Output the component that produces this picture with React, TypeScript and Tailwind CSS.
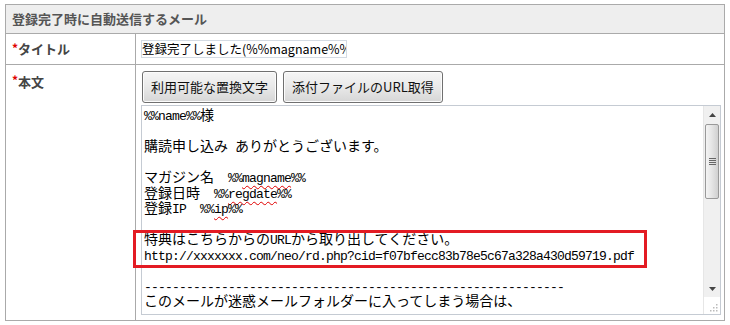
import clsx from "clsx";
import type { ReactNode } from "react";

const cjk = "font-['Noto_Sans_CJK_JP',sans-serif]";

// half-width runs in the textarea (MS Gothic-ish spacing: 7px per char)
function Mono({ children, wavy }: { children: ReactNode; wavy?: boolean }) {
  return (
    <span
      className={clsx(
        "font-['Liberation_Mono',monospace] text-[13px] tracking-[-0.8px]",
        wavy && "underline decoration-wavy decoration-[#e00000] underline-offset-[3px] decoration-1"
      )}
    >
      {children}
    </span>
  );
}

function Line({ children }: { children?: ReactNode }) {
  return <div className="h-[15.5px] leading-[15.5px] whitespace-pre">{children}</div>;
}

function Label({ text }: { text: string }) {
  return (
    <span className="text-[13px] font-bold text-[#444]">
      <span className="text-[#e00000] text-[12px] align-top">*</span>
      {text}
    </span>
  );
}

function Button({ children }: { children: ReactNode }) {
  return (
    <button className="h-[32px] px-[8px] rounded-[3px] border border-[#707070] bg-gradient-to-b from-[#f6f6f6] via-[#e9e9e9] to-[#d6d6d6] text-[13px] text-[#111] shadow-[inset_0_0_0_1px_#fcfcfc]">
      {children}
    </button>
  );
}

function Scrollbar() {
  return (
    <div className="w-[17px] flex flex-col bg-[#f0f0f0] border-l border-[#e6e6e6]">
      <div className="h-[17px] flex items-center justify-center">
        <svg width="7" height="4" viewBox="0 0 7 4">
          <path d="M3.5 0 L7 4 L0 4 Z" fill="#444" />
        </svg>
      </div>
      <div className="flex-1 pt-[1px] px-[1px]">
        <div className="h-[75px] rounded-[2px] border border-[#999] bg-gradient-to-r from-[#f4f4f4] via-[#e4e4e4] to-[#d0d0d0] flex flex-col items-center justify-center gap-[1px]">
          <div className="w-[7px] h-px bg-[#666]" />
          <div className="w-[7px] h-px bg-[#666]" />
          <div className="w-[7px] h-px bg-[#666]" />
          <div className="w-[7px] h-px bg-[#666]" />
        </div>
      </div>
      <div className="h-[17px] flex items-center justify-center">
        <svg width="7" height="4" viewBox="0 0 7 4">
          <path d="M0 0 L7 0 L3.5 4 Z" fill="#444" />
        </svg>
      </div>
      <div className="h-[17px] bg-white flex items-end justify-end p-[2px]">
        <svg width="9" height="9" viewBox="0 0 9 9">
          <rect x="7" y="1" width="1.5" height="1.5" fill="#bbb" />
          <rect x="4" y="4" width="1.5" height="1.5" fill="#bbb" />
          <rect x="7" y="4" width="1.5" height="1.5" fill="#bbb" />
          <rect x="1" y="7" width="1.5" height="1.5" fill="#bbb" />
          <rect x="4" y="7" width="1.5" height="1.5" fill="#bbb" />
          <rect x="7" y="7" width="1.5" height="1.5" fill="#bbb" />
        </svg>
      </div>
    </div>
  );
}

export default function App() {
  return (
    <div className={clsx("w-[730px] h-[325px] bg-white pt-[4px] pl-[5px]", cjk)}>
      <div className="w-[720px] border border-[#aaaaaa]">
        <div className="h-[29px] bg-[#eeeeee] border-b border-[#aaaaaa] flex items-center pl-[6px] text-[13px] font-bold text-[#555]">
          登録完了時に自動送信するメール
        </div>

        <div className="flex h-[31px] border-b border-[#aaaaaa]">
          <div className="w-[130px] border-r border-[#aaaaaa] flex items-center pl-[6px]">
            <Label text="タイトル" />
          </div>
          <div className="flex-1 flex items-center pl-[5px]">
            <div className="w-[206px] h-[18px] border border-[#d4dbe3] overflow-hidden whitespace-nowrap text-[12.5px] leading-[16px] text-black">
              登録完了しました(%%magname%%)
            </div>
          </div>
        </div>

        <div className="flex h-[255px]">
          <div className="w-[130px] border-r border-[#aaaaaa] pl-[6px] pt-[6px] leading-[18px]">
            <Label text="本文" />
          </div>
          <div className="flex-1 pl-[5px] pr-[3px] pt-[6px]">
            <div className="flex gap-[6px] pl-[1px]">
              <Button>利用可能な置換文字</Button>
              <Button>添付ファイルのURL取得</Button>
            </div>
            <div className="relative mt-[2px]">
              <div className="h-[210px] border border-[#c5cbd3] flex bg-white">
                <div className="flex-1 overflow-hidden pt-[1px] pl-[2px] text-[14px] text-black">
                  <Line><Mono>%%name%%</Mono>様</Line>
                  <Line />
                  <Line>購読申し込み<Mono> </Mono>ありがとうございます。</Line>
                  <Line />
                  <Line>マガジン名<Mono>  %%</Mono><Mono wavy>magname</Mono><Mono>%%</Mono></Line>
                  <Line>登録日時<Mono>  %%</Mono><Mono wavy>regdate</Mono><Mono>%%</Mono></Line>
                  <Line>登録<Mono>IP  %%</Mono><Mono wavy>ip</Mono><Mono>%%</Mono></Line>
                  <Line />
                  <Line>特典はこちらからの<Mono>URL</Mono>から取り出してください。</Line>
                  <Line><Mono>http://xxxxxxx.com/neo/rd.php?cid=f07bfecc83b78e5c67a328a430d59719.pdf</Mono></Line>
                  <Line />
                  <Line><Mono>------------------------------------------------------------</Mono></Line>
                  <Line>このメールが迷惑メールフォルダーに入ってしまう場合は、</Line>
                </div>
                <Scrollbar />
              </div>
              {/* highlight box drawn over the textarea */}
              <div className="absolute left-[-8px] top-[125px] w-[514px] h-[38px] border-[3px] border-[#e31b23] pointer-events-none" />
            </div>
          </div>
        </div>
      </div>
    </div>
  );
}
